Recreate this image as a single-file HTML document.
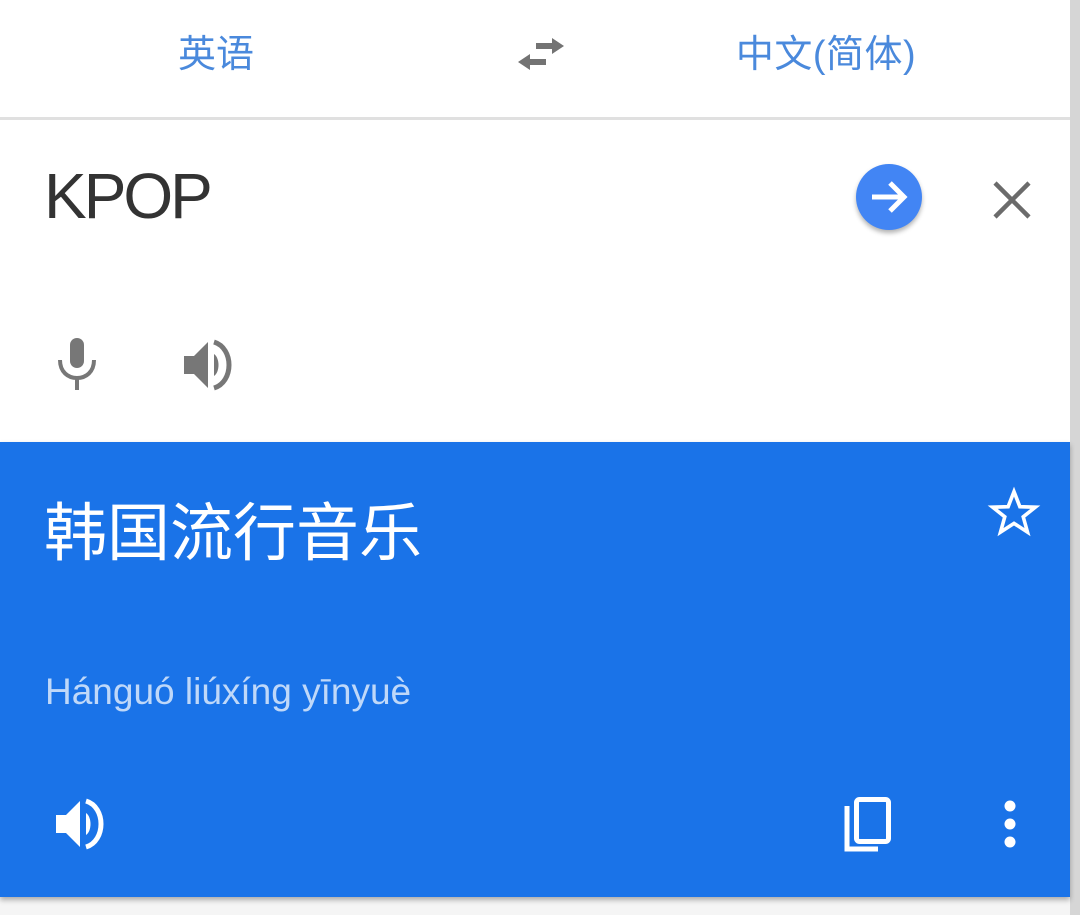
<!DOCTYPE html>
<html><head><meta charset="utf-8"><style>
body{margin:0;width:1080px;height:915px;overflow:hidden;background:#f5f5f5;font-family:"Liberation Sans","Noto Sans CJK SC",sans-serif;position:relative}
.a{position:absolute}
</style></head><body>
<div class="a" style="left:0;top:0;width:1070px;height:442px;background:#fff"></div>
<div class="a" style="left:1070px;top:0;width:10px;height:915px;background:#d6d6d6"></div>
<div class="a" style="left:0;top:117px;width:1070px;height:3px;background:#e0e0e0"></div>
<div class="a" style="left:130px;top:30px;width:172px;text-align:center;font-size:38px;color:#4a89dc;line-height:50px">英语</div>
<div class="a" style="left:690px;top:30px;width:272px;text-align:center;font-size:38px;color:#4a89dc;line-height:50px;letter-spacing:0.5px">中文(简体)</div>
<svg class="a" style="left:514px;top:33px" width="54" height="42" viewBox="0 0 54 40"><path d="M16 20 L4 28 L16 36 V31 H32 V25 H16Z M38 4 V9 H22 V15 H38 V20 L50 12Z" fill="#737373"/></svg>
<div class="a" style="left:44px;top:160px;font-size:64px;color:#333;line-height:72px;letter-spacing:-3px">KPOP</div>
<div class="a" style="left:856px;top:164px;width:66px;height:66px;border-radius:50%;background:#4285f4;box-shadow:0 3px 5px rgba(0,0,0,.3)"></div>
<svg class="a" style="left:856px;top:164px" width="66" height="66" viewBox="0 0 66 66"><path d="M16 33 H48 M34 19 L48 33 L34 47" stroke="#fff" stroke-width="5" fill="none"/></svg>
<svg class="a" style="left:992px;top:180px" width="40" height="40" viewBox="0 0 40 40"><path d="M3 3 L37 37 M37 3 L3 37" stroke="#6b6b6b" stroke-width="4.5"/></svg>
<svg class="a" style="left:52px;top:336px" width="50" height="56" viewBox="0 0 50 56"><rect x="18" y="2" width="14" height="30" rx="7" fill="#777"/><path d="M8 24 C8 36 16 42 25 42 C34 42 42 36 42 24" stroke="#777" stroke-width="4" fill="none"/><path d="M25 42 V54" stroke="#777" stroke-width="4"/></svg>
<svg class="a" style="left:182px;top:338px" width="56" height="54" viewBox="0 0 56 54"><path d="M2 18 H12 L26 4 V50 L12 36 H2Z" fill="#777"/><path d="M32 16 C38 20 38 34 32 38Z" fill="#777"/><path d="M32 4 C52 10 52 44 32 50" stroke="#777" stroke-width="5" fill="none"/></svg>
<div class="a" style="left:0;top:442px;width:1070px;height:455px;background:#1a73e8;box-shadow:0 3px 5px rgba(0,0,0,.3)"></div>
<div class="a" style="left:44px;top:494px;font-size:63px;color:#fff;line-height:80px">韩国流行音乐</div>
<div class="a" style="left:45px;top:669px;font-size:37px;color:rgba(255,255,255,.72);line-height:46px">Hánguó liúxíng yīnyuè</div>
<svg class="a" style="left:986px;top:486px" width="56" height="54" viewBox="0 0 24 24"><path d="M12 2.5 L14.6 9.2 L21.5 9.4 L16.1 13.7 L18 20.5 L12 16.6 L6 20.5 L7.9 13.7 L2.5 9.4 L9.4 9.2Z" stroke="#fff" stroke-width="1.6" fill="none" stroke-linejoin="miter"/></svg>
<svg class="a" style="left:54px;top:797px" width="56" height="54" viewBox="0 0 56 54"><path d="M2 18 H12 L26 4 V50 L12 36 H2Z" fill="#fff"/><path d="M32 16 C38 20 38 34 32 38Z" fill="#fff"/><path d="M32 4 C52 10 52 44 32 50" stroke="#fff" stroke-width="5" fill="none"/></svg>
<svg class="a" style="left:842px;top:796px" width="52" height="58" viewBox="0 0 52 58"><path d="M5 10 V53 H36" stroke="#fff" stroke-width="5" fill="none"/><rect x="14.5" y="3.5" width="32" height="42" rx="3" stroke="#fff" stroke-width="5" fill="none"/></svg>
<svg class="a" style="left:998px;top:800px" width="24" height="50" viewBox="0 0 24 50"><circle cx="12" cy="6" r="5.5" fill="#fff"/><circle cx="12" cy="24" r="5.5" fill="#fff"/><circle cx="12" cy="42" r="5.5" fill="#fff"/></svg>
</body></html>
